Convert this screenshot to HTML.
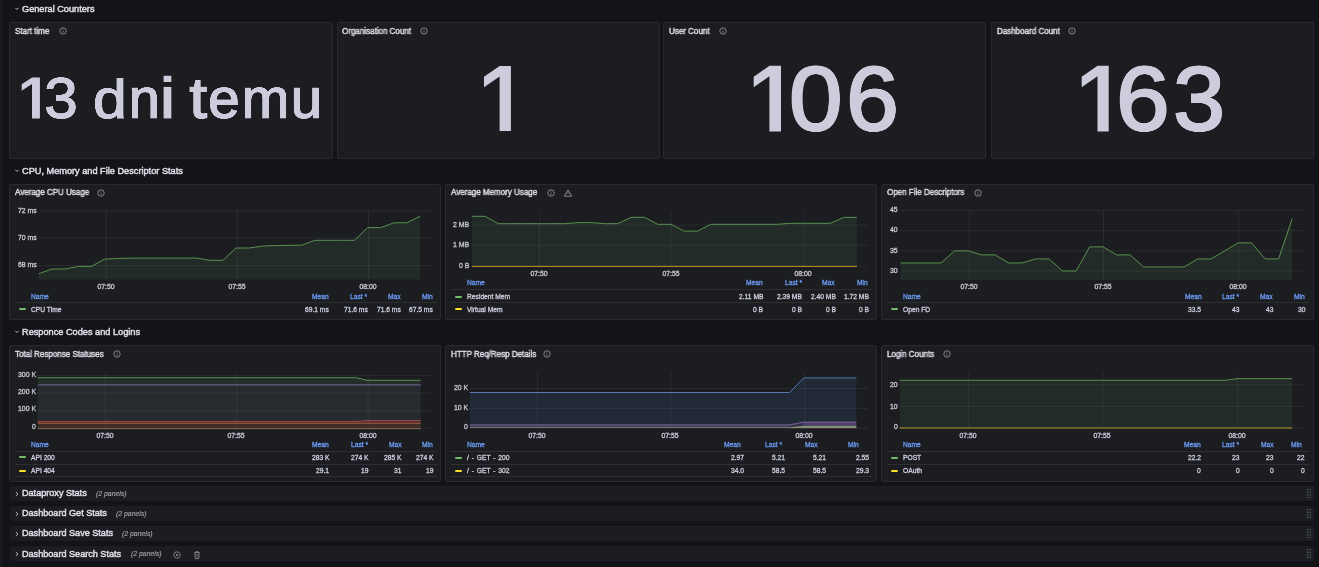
<!DOCTYPE html><html><head><meta charset="utf-8"><title>Grafana</title><style>
html,body{margin:0;padding:0;}
body{width:1319px;height:567px;overflow:hidden;position:relative;background:#131418;font-family:"Liberation Sans",sans-serif;}
.t{position:absolute;white-space:nowrap;will-change:transform;}
.panel{position:absolute;box-sizing:border-box;background:#1b1d21;border:1px solid #282a2f;border-radius:2px;}
.ic{position:absolute;overflow:visible;}
svg.charts{position:absolute;left:0;top:0;}
</style></head><body><div style="position:absolute;left:0px;top:0px;width:2.2px;height:567px;background:#1a1c20;"></div><div class="panel" style="left:9.1px;top:22.3px;width:323.5px;height:136.7px"></div><div class="panel" style="left:336.5px;top:22.3px;width:323.29999999999995px;height:136.7px"></div><div class="panel" style="left:663.15px;top:22.3px;width:323.20000000000005px;height:136.7px"></div><div class="panel" style="left:990.8px;top:22.3px;width:323.0px;height:136.7px"></div><div class="panel" style="left:9.1px;top:183.7px;width:432.29999999999995px;height:136.7px"></div><div class="panel" style="left:445.35px;top:183.7px;width:432.04999999999995px;height:136.7px"></div><div class="panel" style="left:881.4px;top:183.7px;width:432.4px;height:136.7px"></div><div style="position:absolute;left:15.5px;top:301.7px;width:421.2px;height:1.0px;background:rgba(204,204,220,0.10);"></div><div style="position:absolute;left:19.2px;top:308.2px;width:6.900000000000002px;height:2.0px;background:#73bf69;border-radius:1px"></div><div style="position:absolute;left:451.3px;top:289.0px;width:420.90000000000003px;height:1.0px;background:rgba(204,204,220,0.10);"></div><div style="position:absolute;left:451.3px;top:301.7px;width:420.90000000000003px;height:1.0px;background:rgba(204,204,220,0.10);"></div><div style="position:absolute;left:455.2px;top:295.7px;width:6.900000000000034px;height:2.0px;background:#73bf69;border-radius:1px"></div><div style="position:absolute;left:455.2px;top:308.4px;width:6.900000000000034px;height:2.0px;background:#fade2a;border-radius:1px"></div><div style="position:absolute;left:887.3px;top:302.1px;width:421.29999999999995px;height:1.0px;background:rgba(204,204,220,0.10);"></div><div style="position:absolute;left:891.2px;top:308.4px;width:6.899999999999977px;height:2.0px;background:#73bf69;border-radius:1px"></div><div class="panel" style="left:9.1px;top:344.9px;width:432.29999999999995px;height:136.70000000000005px"></div><div class="panel" style="left:445.35px;top:344.9px;width:432.04999999999995px;height:136.70000000000005px"></div><div class="panel" style="left:881.4px;top:344.9px;width:432.4px;height:136.70000000000005px"></div><div style="position:absolute;left:15.5px;top:450.9px;width:421.2px;height:1.0px;background:rgba(204,204,220,0.10);"></div><div style="position:absolute;left:15.5px;top:463.6px;width:421.2px;height:1.0px;background:rgba(204,204,220,0.10);"></div><div style="position:absolute;left:15.5px;top:476.1px;width:421.2px;height:1.0px;background:rgba(204,204,220,0.10);"></div><div style="position:absolute;left:19.2px;top:456.4px;width:6.900000000000002px;height:2.0px;background:#73bf69;border-radius:1px"></div><div style="position:absolute;left:19.2px;top:469.6px;width:6.900000000000002px;height:2.0px;background:#fade2a;border-radius:1px"></div><div style="position:absolute;left:451.3px;top:450.9px;width:420.90000000000003px;height:1.0px;background:rgba(204,204,220,0.10);"></div><div style="position:absolute;left:451.3px;top:463.6px;width:420.90000000000003px;height:1.0px;background:rgba(204,204,220,0.10);"></div><div style="position:absolute;left:451.3px;top:476.1px;width:420.90000000000003px;height:1.0px;background:rgba(204,204,220,0.10);"></div><div style="position:absolute;left:455.2px;top:456.5px;width:6.900000000000034px;height:2.0px;background:#73bf69;border-radius:1px"></div><div style="position:absolute;left:455.2px;top:469.7px;width:6.900000000000034px;height:2.0px;background:#fade2a;border-radius:1px"></div><div style="position:absolute;left:887.3px;top:450.9px;width:421.29999999999995px;height:1.0px;background:rgba(204,204,220,0.10);"></div><div style="position:absolute;left:887.3px;top:463.6px;width:421.29999999999995px;height:1.0px;background:rgba(204,204,220,0.10);"></div><div style="position:absolute;left:891.2px;top:456.5px;width:6.899999999999977px;height:2.0px;background:#73bf69;border-radius:1px"></div><div style="position:absolute;left:891.2px;top:469.7px;width:6.899999999999977px;height:2.0px;background:#fade2a;border-radius:1px"></div><div style="position:absolute;left:9.5px;top:486.1px;width:1304.0px;height:14.799999999999955px;background:#1b1d21;border-radius:2px"></div><div style="position:absolute;left:9.5px;top:506.2px;width:1304.0px;height:14.800000000000011px;background:#1b1d21;border-radius:2px"></div><div style="position:absolute;left:9.5px;top:526.2px;width:1304.0px;height:14.799999999999955px;background:#1b1d21;border-radius:2px"></div><div style="position:absolute;left:9.5px;top:546.3px;width:1304.0px;height:15.0px;background:#1b1d21;border-radius:2px"></div><svg class="charts" width="1319" height="567" viewBox="0 0 1319 567"><line x1="38.8" y1="211.0" x2="432.2" y2="211.0" stroke="rgba(204,204,220,0.08)" stroke-width="1"/><line x1="38.8" y1="237.9" x2="432.2" y2="237.9" stroke="rgba(204,204,220,0.08)" stroke-width="1"/><line x1="38.8" y1="265.5" x2="432.2" y2="265.5" stroke="rgba(204,204,220,0.08)" stroke-width="1"/><line x1="106.2" y1="210.5" x2="106.2" y2="279.6" stroke="rgba(204,204,220,0.08)" stroke-width="1"/><line x1="237.3" y1="210.5" x2="237.3" y2="279.6" stroke="rgba(204,204,220,0.08)" stroke-width="1"/><line x1="368.5" y1="210.5" x2="368.5" y2="279.6" stroke="rgba(204,204,220,0.08)" stroke-width="1"/><polygon points="38.80,279.6 38.80,273.70 51.95,269.00 65.10,269.00 78.25,266.40 91.40,266.40 104.55,259.10 117.70,258.50 130.85,258.10 144.00,258.10 157.15,258.10 170.30,258.10 183.45,258.10 196.60,258.10 209.75,260.30 222.90,260.30 236.05,248.00 249.20,248.00 262.35,246.10 275.50,245.60 288.65,245.40 301.80,245.10 314.95,240.30 328.10,240.30 341.25,240.30 354.40,240.30 367.55,227.60 380.70,227.60 393.85,222.80 407.00,222.80 420.15,216.10 420.15,279.6" fill="rgba(115,191,105,0.09)"/><polyline points="38.80,273.70 51.95,269.00 65.10,269.00 78.25,266.40 91.40,266.40 104.55,259.10 117.70,258.50 130.85,258.10 144.00,258.10 157.15,258.10 170.30,258.10 183.45,258.10 196.60,258.10 209.75,260.30 222.90,260.30 236.05,248.00 249.20,248.00 262.35,246.10 275.50,245.60 288.65,245.40 301.80,245.10 314.95,240.30 328.10,240.30 341.25,240.30 354.40,240.30 367.55,227.60 380.70,227.60 393.85,222.80 407.00,222.80 420.15,216.10" fill="none" stroke="#5a9150" stroke-width="1.0" stroke-linejoin="round"/><line x1="471.8" y1="225.0" x2="868" y2="225.0" stroke="rgba(204,204,220,0.08)" stroke-width="1"/><line x1="471.8" y1="245.3" x2="868" y2="245.3" stroke="rgba(204,204,220,0.08)" stroke-width="1"/><line x1="471.8" y1="266.0" x2="868" y2="266.0" stroke="rgba(204,204,220,0.08)" stroke-width="1"/><line x1="539.5" y1="210.6" x2="539.5" y2="266.3" stroke="rgba(204,204,220,0.08)" stroke-width="1"/><line x1="671.2" y1="210.6" x2="671.2" y2="266.3" stroke="rgba(204,204,220,0.08)" stroke-width="1"/><line x1="804.0" y1="210.6" x2="804.0" y2="266.3" stroke="rgba(204,204,220,0.08)" stroke-width="1"/><polygon points="471.80,266.3 471.80,216.30 485.08,216.30 498.36,223.70 511.64,223.70 524.92,223.70 538.20,223.70 551.48,223.70 564.76,223.70 578.04,222.60 591.32,222.60 604.60,223.70 617.88,223.70 631.16,217.30 644.44,217.30 657.72,224.30 671.00,224.30 684.28,231.10 697.56,231.10 710.84,224.30 724.12,224.30 737.40,224.30 750.68,224.30 763.96,224.30 777.24,224.30 790.52,223.30 803.80,223.30 817.08,223.30 830.36,223.30 843.64,217.40 856.92,217.40 856.92,266.3" fill="rgba(115,191,105,0.09)"/><polyline points="471.80,216.30 485.08,216.30 498.36,223.70 511.64,223.70 524.92,223.70 538.20,223.70 551.48,223.70 564.76,223.70 578.04,222.60 591.32,222.60 604.60,223.70 617.88,223.70 631.16,217.30 644.44,217.30 657.72,224.30 671.00,224.30 684.28,231.10 697.56,231.10 710.84,224.30 724.12,224.30 737.40,224.30 750.68,224.30 763.96,224.30 777.24,224.30 790.52,223.30 803.80,223.30 817.08,223.30 830.36,223.30 843.64,217.40 856.92,217.40" fill="none" stroke="#5a9150" stroke-width="1.0" stroke-linejoin="round"/><polyline points="471.80,266.40 857.00,266.40" fill="none" stroke="#b39a2a" stroke-width="1.0" stroke-linejoin="round"/><line x1="900.6" y1="210.6" x2="1304" y2="210.6" stroke="rgba(204,204,220,0.08)" stroke-width="1"/><line x1="900.6" y1="230.7" x2="1304" y2="230.7" stroke="rgba(204,204,220,0.08)" stroke-width="1"/><line x1="900.6" y1="250.8" x2="1304" y2="250.8" stroke="rgba(204,204,220,0.08)" stroke-width="1"/><line x1="900.6" y1="271.0" x2="1304" y2="271.0" stroke="rgba(204,204,220,0.08)" stroke-width="1"/><line x1="969.4" y1="210.6" x2="969.4" y2="279.8" stroke="rgba(204,204,220,0.08)" stroke-width="1"/><line x1="1103.5" y1="210.6" x2="1103.5" y2="279.8" stroke="rgba(204,204,220,0.08)" stroke-width="1"/><line x1="1238.4" y1="210.6" x2="1238.4" y2="279.8" stroke="rgba(204,204,220,0.08)" stroke-width="1"/><polygon points="900.60,279.8 900.60,262.96 914.10,262.96 927.60,262.96 941.10,262.96 954.60,250.90 968.10,250.90 981.60,254.92 995.10,254.92 1008.60,262.96 1022.10,262.96 1035.60,258.94 1049.10,258.94 1062.60,271.00 1076.10,271.00 1089.60,246.88 1103.10,246.88 1116.60,254.92 1130.10,254.92 1143.60,266.98 1157.10,266.98 1170.60,266.98 1184.10,266.98 1197.60,258.94 1211.10,258.94 1224.60,250.90 1238.10,242.86 1251.60,242.86 1265.10,258.94 1278.60,258.94 1292.10,218.74 1292.10,279.8" fill="rgba(115,191,105,0.09)"/><polyline points="900.60,262.96 914.10,262.96 927.60,262.96 941.10,262.96 954.60,250.90 968.10,250.90 981.60,254.92 995.10,254.92 1008.60,262.96 1022.10,262.96 1035.60,258.94 1049.10,258.94 1062.60,271.00 1076.10,271.00 1089.60,246.88 1103.10,246.88 1116.60,254.92 1130.10,254.92 1143.60,266.98 1157.10,266.98 1170.60,266.98 1184.10,266.98 1197.60,258.94 1211.10,258.94 1224.60,250.90 1238.10,242.86 1251.60,242.86 1265.10,258.94 1278.60,258.94 1292.10,218.74" fill="none" stroke="#5a9150" stroke-width="1.0" stroke-linejoin="round"/><polygon points="32.0,77.5 39.9,77.5 39.9,118.5 32.0,118.5 32.0,84.06 21.7,90.866 21.7,84.306" fill="#ccccdc"/><polygon points="499.6,66 510.9,66 510.9,131 499.6,131 499.6,76.40 484,87.19 484,76.79" fill="#ccccdc"/><polygon points="769.4,65.8 781,65.8 781,131.5 769.4,131.5 769.4,76.31 753.7,87.2182 753.7,76.7062" fill="#ccccdc"/><polygon points="1097.5,65.8 1108.7,65.8 1108.7,131.5 1097.5,131.5 1097.5,76.31 1081.7,87.2182 1081.7,76.7062" fill="#ccccdc"/><line x1="37.7" y1="375.4" x2="432.2" y2="375.4" stroke="rgba(204,204,220,0.08)" stroke-width="1"/><line x1="37.7" y1="393.1" x2="432.2" y2="393.1" stroke="rgba(204,204,220,0.08)" stroke-width="1"/><line x1="37.7" y1="410.7" x2="432.2" y2="410.7" stroke="rgba(204,204,220,0.08)" stroke-width="1"/><line x1="37.7" y1="428.3" x2="432.2" y2="428.3" stroke="rgba(204,204,220,0.08)" stroke-width="1"/><line x1="105.4" y1="372.2" x2="105.4" y2="429.0" stroke="rgba(204,204,220,0.08)" stroke-width="1"/><line x1="236.8" y1="372.2" x2="236.8" y2="429.0" stroke="rgba(204,204,220,0.08)" stroke-width="1"/><line x1="368.1" y1="372.2" x2="368.1" y2="429.0" stroke="rgba(204,204,220,0.08)" stroke-width="1"/><polygon points="37.70,377.70 356.50,377.70 367.00,380.30 420.70,380.30 420.70,384.90 37.70,384.90" fill="rgba(115,191,105,0.10)"/><polygon points="37.70,384.90 420.70,384.90 420.70,420.80 37.70,420.80" fill="rgba(150,185,185,0.09)"/><polygon points="37.70,421.40 356.00,421.40 367.00,420.60 420.70,420.60 420.70,423.00 37.70,423.00" fill="rgba(200,80,80,0.28)"/><polygon points="37.70,423.00 420.70,423.00 420.70,429.00 37.70,429.00" fill="rgba(190,110,70,0.22)"/><polyline points="37.70,377.70 356.50,377.70 367.00,380.30 420.70,380.30" fill="none" stroke="#5a9150" stroke-width="1.0" stroke-linejoin="round"/><polyline points="37.70,384.90 420.70,384.90" fill="none" stroke="#6f6d9a" stroke-width="1.0" stroke-linejoin="round"/><polyline points="37.70,421.40 356.00,421.40 367.00,420.60 420.70,420.60" fill="none" stroke="#a34c4e" stroke-width="1.0" stroke-linejoin="round"/><polyline points="37.70,423.20 420.70,423.20" fill="none" stroke="#b4683f" stroke-width="0.9" stroke-linejoin="round"/><polyline points="37.70,428.70 420.70,428.70" fill="none" stroke="#8a6a58" stroke-width="0.9" stroke-linejoin="round"/><line x1="469.8" y1="388.5" x2="868" y2="388.5" stroke="rgba(204,204,220,0.08)" stroke-width="1"/><line x1="469.8" y1="408.4" x2="868" y2="408.4" stroke="rgba(204,204,220,0.08)" stroke-width="1"/><line x1="469.8" y1="428.2" x2="868" y2="428.2" stroke="rgba(204,204,220,0.08)" stroke-width="1"/><line x1="537.5" y1="372.2" x2="537.5" y2="428.3" stroke="rgba(204,204,220,0.08)" stroke-width="1"/><line x1="671.0" y1="372.2" x2="671.0" y2="428.3" stroke="rgba(204,204,220,0.08)" stroke-width="1"/><line x1="804.5" y1="372.2" x2="804.5" y2="428.3" stroke="rgba(204,204,220,0.08)" stroke-width="1"/><polygon points="469.80,392.50 789.60,392.50 803.80,377.90 856.30,377.90 856.30,428.30 469.80,428.30" fill="rgba(87,148,242,0.10)"/><polygon points="469.80,424.90 789.60,424.90 803.80,422.10 856.30,422.10 856.30,428.30 469.80,428.30" fill="rgba(184,119,217,0.12)"/><polygon points="803.80,422.10 856.30,422.10 856.30,425.50 803.80,425.50" fill="rgba(184,119,217,0.22)"/><polygon points="789.60,427.30 803.80,425.80 856.30,425.80 856.30,428.50 789.60,428.50" fill="rgba(190,225,160,0.55)"/><polyline points="469.80,392.50 789.60,392.50 803.80,377.90 856.30,377.90" fill="none" stroke="#527aae" stroke-width="1.0" stroke-linejoin="round"/><polyline points="469.80,424.90 789.60,424.90 803.80,422.10 856.30,422.10" fill="none" stroke="#6f5a8c" stroke-width="1.1" stroke-linejoin="round"/><polyline points="469.80,427.30 789.60,427.30" fill="none" stroke="#8a917f" stroke-width="0.9" stroke-linejoin="round"/><polyline points="469.80,428.70 856.30,428.70" fill="none" stroke="#2e1c1e" stroke-width="0.8" stroke-linejoin="round"/><line x1="899.7" y1="384.7" x2="1303.7" y2="384.7" stroke="rgba(204,204,220,0.08)" stroke-width="1"/><line x1="899.7" y1="406.4" x2="1303.7" y2="406.4" stroke="rgba(204,204,220,0.08)" stroke-width="1"/><line x1="899.7" y1="428.0" x2="1303.7" y2="428.0" stroke="rgba(204,204,220,0.08)" stroke-width="1"/><line x1="968.7" y1="372.2" x2="968.7" y2="428.0" stroke="rgba(204,204,220,0.08)" stroke-width="1"/><line x1="1103.0" y1="372.2" x2="1103.0" y2="428.0" stroke="rgba(204,204,220,0.08)" stroke-width="1"/><line x1="1237.7" y1="372.2" x2="1237.7" y2="428.0" stroke="rgba(204,204,220,0.08)" stroke-width="1"/><polygon points="899.70,380.30 1225.30,380.30 1237.00,378.70 1292.00,378.70 1292.00,428.00 899.70,428.00" fill="rgba(115,191,105,0.09)"/><polyline points="899.70,380.30 1225.30,380.30 1237.00,378.70 1292.00,378.70" fill="none" stroke="#5a9150" stroke-width="1.0" stroke-linejoin="round"/><polyline points="899.70,428.00 1292.00,428.00" fill="none" stroke="#b39a2a" stroke-width="1.0" stroke-linejoin="round"/></svg><svg class="ic" style="left:13px;top:5.4px" width="8" height="8" viewBox="0 0 8 8"><path d="M2.4 2.9 L4 4.5 L5.6 2.9" fill="none" stroke="#ccccdc" stroke-width="0.9"/></svg><div class="t " style="left:21.70px;top:5.39px;font-size:9.2px;line-height:9.2px;font-weight:normal;color:#dcdce6;-webkit-text-stroke:0.5px #dcdce6">General Counters</div><div class="t " style="left:15.00px;top:26.93px;font-size:8.3px;line-height:8.3px;font-weight:normal;color:#dcdce6;-webkit-text-stroke:0.45px #dcdce6;transform:scaleX(0.965);transform-origin:0 0">Start time</div><svg class="ic" style="left:57px;top:25.2px" width="12" height="12" viewBox="0 0 12 12"><circle cx="6" cy="6" r="3.2" fill="none" stroke="#8e8e96" stroke-width="0.9"/><line x1="6" y1="5.6" x2="6" y2="7.8" stroke="#8e8e96" stroke-width="0.8"/><circle cx="6" cy="4.4" r="0.45" fill="#8e8e96"/></svg><div class="t " style="left:342.40px;top:26.93px;font-size:8.3px;line-height:8.3px;font-weight:normal;color:#dcdce6;-webkit-text-stroke:0.45px #dcdce6;transform:scaleX(0.965);transform-origin:0 0">Organisation Count</div><svg class="ic" style="left:418.3px;top:25.2px" width="12" height="12" viewBox="0 0 12 12"><circle cx="6" cy="6" r="3.2" fill="none" stroke="#8e8e96" stroke-width="0.9"/><line x1="6" y1="5.6" x2="6" y2="7.8" stroke="#8e8e96" stroke-width="0.8"/><circle cx="6" cy="4.4" r="0.45" fill="#8e8e96"/></svg><div class="t " style="left:669.05px;top:26.93px;font-size:8.3px;line-height:8.3px;font-weight:normal;color:#dcdce6;-webkit-text-stroke:0.45px #dcdce6;transform:scaleX(0.965);transform-origin:0 0">User Count</div><svg class="ic" style="left:716.6px;top:25.2px" width="12" height="12" viewBox="0 0 12 12"><circle cx="6" cy="6" r="3.2" fill="none" stroke="#8e8e96" stroke-width="0.9"/><line x1="6" y1="5.6" x2="6" y2="7.8" stroke="#8e8e96" stroke-width="0.8"/><circle cx="6" cy="4.4" r="0.45" fill="#8e8e96"/></svg><div class="t " style="left:996.70px;top:26.93px;font-size:8.3px;line-height:8.3px;font-weight:normal;color:#dcdce6;-webkit-text-stroke:0.45px #dcdce6;transform:scaleX(0.965);transform-origin:0 0">Dashboard Count</div><svg class="ic" style="left:1066px;top:25.2px" width="12" height="12" viewBox="0 0 12 12"><circle cx="6" cy="6" r="3.2" fill="none" stroke="#8e8e96" stroke-width="0.9"/><line x1="6" y1="5.6" x2="6" y2="7.8" stroke="#8e8e96" stroke-width="0.8"/><circle cx="6" cy="4.4" r="0.45" fill="#8e8e96"/></svg><svg class="ic" style="left:13px;top:167px" width="8" height="8" viewBox="0 0 8 8"><path d="M2.4 2.9 L4 4.5 L5.6 2.9" fill="none" stroke="#ccccdc" stroke-width="0.9"/></svg><div class="t " style="left:21.70px;top:166.99px;font-size:9.2px;line-height:9.2px;font-weight:normal;color:#dcdce6;-webkit-text-stroke:0.5px #dcdce6">CPU, Memory and File Descriptor Stats</div><div class="t " style="left:15.30px;top:188.23px;font-size:8.3px;line-height:8.3px;font-weight:normal;color:#dcdce6;-webkit-text-stroke:0.45px #dcdce6;transform:scaleX(0.965);transform-origin:0 0">Average CPU Usage</div><svg class="ic" style="left:94.5px;top:186.6px" width="12" height="12" viewBox="0 0 12 12"><circle cx="6" cy="6" r="3.2" fill="none" stroke="#8e8e96" stroke-width="0.9"/><line x1="6" y1="5.6" x2="6" y2="7.8" stroke="#8e8e96" stroke-width="0.8"/><circle cx="6" cy="4.4" r="0.45" fill="#8e8e96"/></svg><div class="t " style="left:451.20px;top:188.23px;font-size:8.3px;line-height:8.3px;font-weight:normal;color:#dcdce6;-webkit-text-stroke:0.45px #dcdce6;transform:scaleX(0.965);transform-origin:0 0">Average Memory Usage</div><svg class="ic" style="left:544.9px;top:186.8px" width="12" height="12" viewBox="0 0 12 12"><circle cx="6" cy="6" r="3.2" fill="none" stroke="#8e8e96" stroke-width="0.9"/><line x1="6" y1="5.6" x2="6" y2="7.8" stroke="#8e8e96" stroke-width="0.8"/><circle cx="6" cy="4.4" r="0.45" fill="#8e8e96"/></svg><svg class="ic" style="left:561.5px;top:186.8px" width="12" height="12" viewBox="0 0 12 12"><path d="M6 2.8 L9.7 9.2 L2.3 9.2 Z" fill="none" stroke="#8e8e96" stroke-width="0.95" stroke-linejoin="round"/><line x1="6" y1="5" x2="6" y2="7.2" stroke="#8e8e96" stroke-width="0.7"/></svg><div class="t " style="left:887.20px;top:188.23px;font-size:8.3px;line-height:8.3px;font-weight:normal;color:#dcdce6;-webkit-text-stroke:0.45px #dcdce6;transform:scaleX(0.965);transform-origin:0 0">Open File Descriptors</div><svg class="ic" style="left:971.7px;top:186.8px" width="12" height="12" viewBox="0 0 12 12"><circle cx="6" cy="6" r="3.2" fill="none" stroke="#8e8e96" stroke-width="0.9"/><line x1="6" y1="5.6" x2="6" y2="7.8" stroke="#8e8e96" stroke-width="0.8"/><circle cx="6" cy="4.4" r="0.45" fill="#8e8e96"/></svg><div class="t " style="right:1282.60px;top:207.72px;font-size:6.9px;line-height:6.9px;font-weight:normal;color:#c8c8d4;-webkit-text-stroke:0.3px currentColor">72 ms</div><div class="t " style="right:1282.60px;top:234.62px;font-size:6.9px;line-height:6.9px;font-weight:normal;color:#c8c8d4;-webkit-text-stroke:0.3px currentColor">70 ms</div><div class="t " style="right:1282.60px;top:262.22px;font-size:6.9px;line-height:6.9px;font-weight:normal;color:#c8c8d4;-webkit-text-stroke:0.3px currentColor">68 ms</div><div class="t " style="left:105.60px;transform:translateX(-50%);top:284.32px;font-size:6.9px;line-height:6.9px;font-weight:normal;color:#c8c8d4;-webkit-text-stroke:0.3px currentColor">07:50</div><div class="t " style="left:236.70px;transform:translateX(-50%);top:284.32px;font-size:6.9px;line-height:6.9px;font-weight:normal;color:#c8c8d4;-webkit-text-stroke:0.3px currentColor">07:55</div><div class="t " style="left:367.90px;transform:translateX(-50%);top:284.32px;font-size:6.9px;line-height:6.9px;font-weight:normal;color:#c8c8d4;-webkit-text-stroke:0.3px currentColor">08:00</div><div class="t " style="left:30.90px;top:293.82px;font-size:6.7px;line-height:6.7px;font-weight:normal;color:#6b9af2;-webkit-text-stroke:0.3px currentColor">Name</div><div class="t " style="right:989.80px;top:293.82px;font-size:6.7px;line-height:6.7px;font-weight:normal;color:#6b9af2;-webkit-text-stroke:0.3px currentColor">Mean</div><div class="t " style="right:951.90px;top:293.82px;font-size:6.7px;line-height:6.7px;font-weight:normal;color:#6b9af2;-webkit-text-stroke:0.3px currentColor">Last *</div><div class="t " style="right:918.20px;top:293.82px;font-size:6.7px;line-height:6.7px;font-weight:normal;color:#6b9af2;-webkit-text-stroke:0.3px currentColor">Max</div><div class="t " style="right:886.60px;top:293.82px;font-size:6.7px;line-height:6.7px;font-weight:normal;color:#6b9af2;-webkit-text-stroke:0.3px currentColor">Min</div><div class="t " style="left:31.00px;top:306.52px;font-size:6.7px;line-height:6.7px;font-weight:normal;color:#ccccdc;-webkit-text-stroke:0.3px currentColor">CPU Time</div><div class="t " style="right:990.00px;top:306.52px;font-size:6.7px;line-height:6.7px;font-weight:normal;color:#ccccdc;-webkit-text-stroke:0.3px currentColor">69.1 ms</div><div class="t " style="right:951.50px;top:306.52px;font-size:6.7px;line-height:6.7px;font-weight:normal;color:#ccccdc;-webkit-text-stroke:0.3px currentColor">71.6 ms</div><div class="t " style="right:918.20px;top:306.52px;font-size:6.7px;line-height:6.7px;font-weight:normal;color:#ccccdc;-webkit-text-stroke:0.3px currentColor">71.6 ms</div><div class="t " style="right:886.10px;top:306.52px;font-size:6.7px;line-height:6.7px;font-weight:normal;color:#ccccdc;-webkit-text-stroke:0.3px currentColor">67.5 ms</div><div class="t " style="right:849.70px;top:221.72px;font-size:6.9px;line-height:6.9px;font-weight:normal;color:#c8c8d4;-webkit-text-stroke:0.3px currentColor">2 MB</div><div class="t " style="right:849.70px;top:242.02px;font-size:6.9px;line-height:6.9px;font-weight:normal;color:#c8c8d4;-webkit-text-stroke:0.3px currentColor">1 MB</div><div class="t " style="right:849.70px;top:262.72px;font-size:6.9px;line-height:6.9px;font-weight:normal;color:#c8c8d4;-webkit-text-stroke:0.3px currentColor">0 B</div><div class="t " style="left:538.90px;transform:translateX(-50%);top:271.22px;font-size:6.9px;line-height:6.9px;font-weight:normal;color:#c8c8d4;-webkit-text-stroke:0.3px currentColor">07:50</div><div class="t " style="left:670.60px;transform:translateX(-50%);top:271.22px;font-size:6.9px;line-height:6.9px;font-weight:normal;color:#c8c8d4;-webkit-text-stroke:0.3px currentColor">07:55</div><div class="t " style="left:803.40px;transform:translateX(-50%);top:271.22px;font-size:6.9px;line-height:6.9px;font-weight:normal;color:#c8c8d4;-webkit-text-stroke:0.3px currentColor">08:00</div><div class="t " style="left:466.90px;top:280.22px;font-size:6.7px;line-height:6.7px;font-weight:normal;color:#6b9af2;-webkit-text-stroke:0.3px currentColor">Name</div><div class="t " style="right:555.80px;top:280.22px;font-size:6.7px;line-height:6.7px;font-weight:normal;color:#6b9af2;-webkit-text-stroke:0.3px currentColor">Mean</div><div class="t " style="right:517.30px;top:280.22px;font-size:6.7px;line-height:6.7px;font-weight:normal;color:#6b9af2;-webkit-text-stroke:0.3px currentColor">Last *</div><div class="t " style="right:483.90px;top:280.22px;font-size:6.7px;line-height:6.7px;font-weight:normal;color:#6b9af2;-webkit-text-stroke:0.3px currentColor">Max</div><div class="t " style="right:451.00px;top:280.22px;font-size:6.7px;line-height:6.7px;font-weight:normal;color:#6b9af2;-webkit-text-stroke:0.3px currentColor">Min</div><div class="t " style="left:467.00px;top:294.02px;font-size:6.7px;line-height:6.7px;font-weight:normal;color:#ccccdc;-webkit-text-stroke:0.3px currentColor">Resident Mem</div><div class="t " style="right:555.80px;top:294.02px;font-size:6.7px;line-height:6.7px;font-weight:normal;color:#ccccdc;-webkit-text-stroke:0.3px currentColor">2.11 MB</div><div class="t " style="right:517.30px;top:294.02px;font-size:6.7px;line-height:6.7px;font-weight:normal;color:#ccccdc;-webkit-text-stroke:0.3px currentColor">2.39 MB</div><div class="t " style="right:482.80px;top:294.02px;font-size:6.7px;line-height:6.7px;font-weight:normal;color:#ccccdc;-webkit-text-stroke:0.3px currentColor">2.40 MB</div><div class="t " style="right:450.00px;top:294.02px;font-size:6.7px;line-height:6.7px;font-weight:normal;color:#ccccdc;-webkit-text-stroke:0.3px currentColor">1.72 MB</div><div class="t " style="left:467.00px;top:306.72px;font-size:6.7px;line-height:6.7px;font-weight:normal;color:#ccccdc;-webkit-text-stroke:0.3px currentColor">Virtual Mem</div><div class="t " style="right:555.80px;top:306.72px;font-size:6.7px;line-height:6.7px;font-weight:normal;color:#ccccdc;-webkit-text-stroke:0.3px currentColor">0 B</div><div class="t " style="right:517.30px;top:306.72px;font-size:6.7px;line-height:6.7px;font-weight:normal;color:#ccccdc;-webkit-text-stroke:0.3px currentColor">0 B</div><div class="t " style="right:482.80px;top:306.72px;font-size:6.7px;line-height:6.7px;font-weight:normal;color:#ccccdc;-webkit-text-stroke:0.3px currentColor">0 B</div><div class="t " style="right:450.00px;top:306.72px;font-size:6.7px;line-height:6.7px;font-weight:normal;color:#ccccdc;-webkit-text-stroke:0.3px currentColor">0 B</div><div class="t " style="right:421.00px;top:207.32px;font-size:6.9px;line-height:6.9px;font-weight:normal;color:#c8c8d4;-webkit-text-stroke:0.3px currentColor">45</div><div class="t " style="right:421.00px;top:227.42px;font-size:6.9px;line-height:6.9px;font-weight:normal;color:#c8c8d4;-webkit-text-stroke:0.3px currentColor">40</div><div class="t " style="right:421.00px;top:247.52px;font-size:6.9px;line-height:6.9px;font-weight:normal;color:#c8c8d4;-webkit-text-stroke:0.3px currentColor">35</div><div class="t " style="right:421.00px;top:267.72px;font-size:6.9px;line-height:6.9px;font-weight:normal;color:#c8c8d4;-webkit-text-stroke:0.3px currentColor">30</div><div class="t " style="left:968.80px;transform:translateX(-50%);top:283.92px;font-size:6.9px;line-height:6.9px;font-weight:normal;color:#c8c8d4;-webkit-text-stroke:0.3px currentColor">07:50</div><div class="t " style="left:1102.90px;transform:translateX(-50%);top:283.92px;font-size:6.9px;line-height:6.9px;font-weight:normal;color:#c8c8d4;-webkit-text-stroke:0.3px currentColor">07:55</div><div class="t " style="left:1237.80px;transform:translateX(-50%);top:283.92px;font-size:6.9px;line-height:6.9px;font-weight:normal;color:#c8c8d4;-webkit-text-stroke:0.3px currentColor">08:00</div><div class="t " style="left:902.90px;top:294.02px;font-size:6.7px;line-height:6.7px;font-weight:normal;color:#6b9af2;-webkit-text-stroke:0.3px currentColor">Name</div><div class="t " style="right:117.60px;top:294.02px;font-size:6.7px;line-height:6.7px;font-weight:normal;color:#6b9af2;-webkit-text-stroke:0.3px currentColor">Mean</div><div class="t " style="right:79.50px;top:294.02px;font-size:6.7px;line-height:6.7px;font-weight:normal;color:#6b9af2;-webkit-text-stroke:0.3px currentColor">Last *</div><div class="t " style="right:45.90px;top:294.02px;font-size:6.7px;line-height:6.7px;font-weight:normal;color:#6b9af2;-webkit-text-stroke:0.3px currentColor">Max</div><div class="t " style="right:13.90px;top:294.02px;font-size:6.7px;line-height:6.7px;font-weight:normal;color:#6b9af2;-webkit-text-stroke:0.3px currentColor">Min</div><div class="t " style="left:903.00px;top:306.72px;font-size:6.7px;line-height:6.7px;font-weight:normal;color:#ccccdc;-webkit-text-stroke:0.3px currentColor">Open FD</div><div class="t " style="right:117.60px;top:306.72px;font-size:6.7px;line-height:6.7px;font-weight:normal;color:#ccccdc;-webkit-text-stroke:0.3px currentColor">33.5</div><div class="t " style="right:79.10px;top:306.72px;font-size:6.7px;line-height:6.7px;font-weight:normal;color:#ccccdc;-webkit-text-stroke:0.3px currentColor">43</div><div class="t " style="right:45.90px;top:306.72px;font-size:6.7px;line-height:6.7px;font-weight:normal;color:#ccccdc;-webkit-text-stroke:0.3px currentColor">43</div><div class="t " style="right:13.90px;top:306.72px;font-size:6.7px;line-height:6.7px;font-weight:normal;color:#ccccdc;-webkit-text-stroke:0.3px currentColor">30</div><div class="t" style="left:0;top:0;font-size:200px;line-height:200px;color:#ccccdc;-webkit-text-stroke:5.2px #ccccdc;transform-origin:0 0;transform:matrix(0.29800,0,0,0.28446,44.410,69.604)">3</div><div class="t" style="left:0;top:0;font-size:200px;line-height:200px;color:#ccccdc;-webkit-text-stroke:5.2px #ccccdc;transform-origin:0 0;transform:matrix(0.30105,0,0,0.26863,93.194,72.259)">d</div><div class="t" style="left:0;top:0;font-size:200px;line-height:200px;color:#ccccdc;-webkit-text-stroke:5.2px #ccccdc;transform-origin:0 0;transform:matrix(0.28022,0,0,0.27632,128.598,70.974)">n</div><div class="t" style="left:0;top:0;font-size:200px;line-height:200px;color:#ccccdc;-webkit-text-stroke:5.2px #ccccdc;transform-origin:0 0;transform:matrix(0.34348,0,0,0.28477,159.822,69.520)">i</div><div class="t" style="left:0;top:0;font-size:200px;line-height:200px;color:#ccccdc;-webkit-text-stroke:5.2px #ccccdc;transform-origin:0 0;transform:matrix(0.31930,0,0,0.28467,189.300,69.467)">t</div><div class="t" style="left:0;top:0;font-size:200px;line-height:200px;color:#ccccdc;-webkit-text-stroke:5.2px #ccccdc;transform-origin:0 0;transform:matrix(0.28182,0,0,0.27586,208.209,71.000)">e</div><div class="t" style="left:0;top:0;font-size:200px;line-height:200px;color:#ccccdc;-webkit-text-stroke:5.2px #ccccdc;transform-origin:0 0;transform:matrix(0.28630,0,0,0.27632,241.637,70.974)">m</div><div class="t" style="left:0;top:0;font-size:200px;line-height:200px;color:#ccccdc;-webkit-text-stroke:5.2px #ccccdc;transform-origin:0 0;transform:matrix(0.27912,0,0,0.27632,290.809,70.921)">u</div><div class="t" style="left:0;top:0;font-size:200px;line-height:200px;color:#ccccdc;-webkit-text-stroke:5.2px #ccccdc;transform-origin:0 0;transform:matrix(0.47822,0,0,0.45270,789.109,53.430)">0</div><div class="t" style="left:0;top:0;font-size:200px;line-height:200px;color:#ccccdc;-webkit-text-stroke:5.2px #ccccdc;transform-origin:0 0;transform:matrix(0.47113,0,0,0.45270,846.231,53.430)">6</div><div class="t" style="left:0;top:0;font-size:200px;line-height:200px;color:#ccccdc;-webkit-text-stroke:5.2px #ccccdc;transform-origin:0 0;transform:matrix(0.47938,0,0,0.45270,1116.165,53.430)">6</div><div class="t" style="left:0;top:0;font-size:200px;line-height:200px;color:#ccccdc;-webkit-text-stroke:5.2px #ccccdc;transform-origin:0 0;transform:matrix(0.46500,0,0,0.45270,1173.175,53.430)">3</div><svg class="ic" style="left:13px;top:328px" width="8" height="8" viewBox="0 0 8 8"><path d="M2.4 2.9 L4 4.5 L5.6 2.9" fill="none" stroke="#ccccdc" stroke-width="0.9"/></svg><div class="t " style="left:21.70px;top:327.99px;font-size:9.2px;line-height:9.2px;font-weight:normal;color:#dcdce6;-webkit-text-stroke:0.5px #dcdce6">Responce Codes and Logins</div><div class="t " style="left:15.30px;top:349.83px;font-size:8.3px;line-height:8.3px;font-weight:normal;color:#dcdce6;-webkit-text-stroke:0.45px #dcdce6;transform:scaleX(0.965);transform-origin:0 0">Total Response Statuses</div><svg class="ic" style="left:110.5px;top:348px" width="12" height="12" viewBox="0 0 12 12"><circle cx="6" cy="6" r="3.2" fill="none" stroke="#8e8e96" stroke-width="0.9"/><line x1="6" y1="5.6" x2="6" y2="7.8" stroke="#8e8e96" stroke-width="0.8"/><circle cx="6" cy="4.4" r="0.45" fill="#8e8e96"/></svg><div class="t " style="left:451.20px;top:349.83px;font-size:8.3px;line-height:8.3px;font-weight:normal;color:#dcdce6;-webkit-text-stroke:0.45px #dcdce6;transform:scaleX(0.965);transform-origin:0 0">HTTP Req/Resp Details</div><svg class="ic" style="left:541.3px;top:348px" width="12" height="12" viewBox="0 0 12 12"><circle cx="6" cy="6" r="3.2" fill="none" stroke="#8e8e96" stroke-width="0.9"/><line x1="6" y1="5.6" x2="6" y2="7.8" stroke="#8e8e96" stroke-width="0.8"/><circle cx="6" cy="4.4" r="0.45" fill="#8e8e96"/></svg><div class="t " style="left:887.20px;top:349.83px;font-size:8.3px;line-height:8.3px;font-weight:normal;color:#dcdce6;-webkit-text-stroke:0.45px #dcdce6;transform:scaleX(0.965);transform-origin:0 0">Login Counts</div><svg class="ic" style="left:940.7px;top:348px" width="12" height="12" viewBox="0 0 12 12"><circle cx="6" cy="6" r="3.2" fill="none" stroke="#8e8e96" stroke-width="0.9"/><line x1="6" y1="5.6" x2="6" y2="7.8" stroke="#8e8e96" stroke-width="0.8"/><circle cx="6" cy="4.4" r="0.45" fill="#8e8e96"/></svg><div class="t " style="right:1283.00px;top:371.62px;font-size:6.9px;line-height:6.9px;font-weight:normal;color:#c8c8d4;-webkit-text-stroke:0.3px currentColor">300 K</div><div class="t " style="right:1283.00px;top:388.92px;font-size:6.9px;line-height:6.9px;font-weight:normal;color:#c8c8d4;-webkit-text-stroke:0.3px currentColor">200 K</div><div class="t " style="right:1283.00px;top:406.32px;font-size:6.9px;line-height:6.9px;font-weight:normal;color:#c8c8d4;-webkit-text-stroke:0.3px currentColor">100 K</div><div class="t " style="right:1283.00px;top:423.62px;font-size:6.9px;line-height:6.9px;font-weight:normal;color:#c8c8d4;-webkit-text-stroke:0.3px currentColor">0</div><div class="t " style="left:104.80px;transform:translateX(-50%);top:432.62px;font-size:6.9px;line-height:6.9px;font-weight:normal;color:#c8c8d4;-webkit-text-stroke:0.3px currentColor">07:50</div><div class="t " style="left:236.20px;transform:translateX(-50%);top:432.62px;font-size:6.9px;line-height:6.9px;font-weight:normal;color:#c8c8d4;-webkit-text-stroke:0.3px currentColor">07:55</div><div class="t " style="left:367.50px;transform:translateX(-50%);top:432.62px;font-size:6.9px;line-height:6.9px;font-weight:normal;color:#c8c8d4;-webkit-text-stroke:0.3px currentColor">08:00</div><div class="t " style="left:30.90px;top:441.92px;font-size:6.7px;line-height:6.7px;font-weight:normal;color:#6b9af2;-webkit-text-stroke:0.3px currentColor">Name</div><div class="t " style="right:989.80px;top:441.92px;font-size:6.7px;line-height:6.7px;font-weight:normal;color:#6b9af2;-webkit-text-stroke:0.3px currentColor">Mean</div><div class="t " style="right:950.90px;top:441.92px;font-size:6.7px;line-height:6.7px;font-weight:normal;color:#6b9af2;-webkit-text-stroke:0.3px currentColor">Last *</div><div class="t " style="right:917.60px;top:441.92px;font-size:6.7px;line-height:6.7px;font-weight:normal;color:#6b9af2;-webkit-text-stroke:0.3px currentColor">Max</div><div class="t " style="right:885.80px;top:441.92px;font-size:6.7px;line-height:6.7px;font-weight:normal;color:#6b9af2;-webkit-text-stroke:0.3px currentColor">Min</div><div class="t " style="left:31.00px;top:454.72px;font-size:6.7px;line-height:6.7px;font-weight:normal;color:#ccccdc;-webkit-text-stroke:0.3px currentColor">API 200</div><div class="t " style="right:989.80px;top:454.72px;font-size:6.7px;line-height:6.7px;font-weight:normal;color:#ccccdc;-webkit-text-stroke:0.3px currentColor">283 K</div><div class="t " style="right:950.90px;top:454.72px;font-size:6.7px;line-height:6.7px;font-weight:normal;color:#ccccdc;-webkit-text-stroke:0.3px currentColor">274 K</div><div class="t " style="right:917.60px;top:454.72px;font-size:6.7px;line-height:6.7px;font-weight:normal;color:#ccccdc;-webkit-text-stroke:0.3px currentColor">285 K</div><div class="t " style="right:885.80px;top:454.72px;font-size:6.7px;line-height:6.7px;font-weight:normal;color:#ccccdc;-webkit-text-stroke:0.3px currentColor">274 K</div><div class="t " style="left:31.00px;top:467.92px;font-size:6.7px;line-height:6.7px;font-weight:normal;color:#ccccdc;-webkit-text-stroke:0.3px currentColor">API 404</div><div class="t " style="right:989.80px;top:467.92px;font-size:6.7px;line-height:6.7px;font-weight:normal;color:#ccccdc;-webkit-text-stroke:0.3px currentColor">29.1</div><div class="t " style="right:950.90px;top:467.92px;font-size:6.7px;line-height:6.7px;font-weight:normal;color:#ccccdc;-webkit-text-stroke:0.3px currentColor">19</div><div class="t " style="right:917.60px;top:467.92px;font-size:6.7px;line-height:6.7px;font-weight:normal;color:#ccccdc;-webkit-text-stroke:0.3px currentColor">31</div><div class="t " style="right:885.80px;top:467.92px;font-size:6.7px;line-height:6.7px;font-weight:normal;color:#ccccdc;-webkit-text-stroke:0.3px currentColor">19</div><div class="t " style="right:851.00px;top:385.22px;font-size:6.9px;line-height:6.9px;font-weight:normal;color:#c8c8d4;-webkit-text-stroke:0.3px currentColor">20 K</div><div class="t " style="right:851.00px;top:405.12px;font-size:6.9px;line-height:6.9px;font-weight:normal;color:#c8c8d4;-webkit-text-stroke:0.3px currentColor">10 K</div><div class="t " style="right:851.00px;top:424.12px;font-size:6.9px;line-height:6.9px;font-weight:normal;color:#c8c8d4;-webkit-text-stroke:0.3px currentColor">0</div><div class="t " style="left:536.90px;transform:translateX(-50%);top:432.52px;font-size:6.9px;line-height:6.9px;font-weight:normal;color:#c8c8d4;-webkit-text-stroke:0.3px currentColor">07:50</div><div class="t " style="left:670.40px;transform:translateX(-50%);top:432.52px;font-size:6.9px;line-height:6.9px;font-weight:normal;color:#c8c8d4;-webkit-text-stroke:0.3px currentColor">07:55</div><div class="t " style="left:803.90px;transform:translateX(-50%);top:432.52px;font-size:6.9px;line-height:6.9px;font-weight:normal;color:#c8c8d4;-webkit-text-stroke:0.3px currentColor">08:00</div><div class="t " style="left:466.90px;top:442.02px;font-size:6.7px;line-height:6.7px;font-weight:normal;color:#6b9af2;-webkit-text-stroke:0.3px currentColor">Name</div><div class="t " style="right:578.70px;top:442.02px;font-size:6.7px;line-height:6.7px;font-weight:normal;color:#6b9af2;-webkit-text-stroke:0.3px currentColor">Mean</div><div class="t " style="right:537.10px;top:442.02px;font-size:6.7px;line-height:6.7px;font-weight:normal;color:#6b9af2;-webkit-text-stroke:0.3px currentColor">Last *</div><div class="t " style="right:501.00px;top:442.02px;font-size:6.7px;line-height:6.7px;font-weight:normal;color:#6b9af2;-webkit-text-stroke:0.3px currentColor">Max</div><div class="t " style="right:460.70px;top:442.02px;font-size:6.7px;line-height:6.7px;font-weight:normal;color:#6b9af2;-webkit-text-stroke:0.3px currentColor">Min</div><div class="t " style="left:467.00px;top:454.82px;font-size:6.7px;line-height:6.7px;font-weight:normal;color:#ccccdc;-webkit-text-stroke:0.3px currentColor;word-spacing:1px">/ - GET - 200</div><div class="t " style="right:575.30px;top:454.82px;font-size:6.7px;line-height:6.7px;font-weight:normal;color:#ccccdc;-webkit-text-stroke:0.3px currentColor">2.97</div><div class="t " style="right:533.70px;top:454.82px;font-size:6.7px;line-height:6.7px;font-weight:normal;color:#ccccdc;-webkit-text-stroke:0.3px currentColor">5.21</div><div class="t " style="right:492.80px;top:454.82px;font-size:6.7px;line-height:6.7px;font-weight:normal;color:#ccccdc;-webkit-text-stroke:0.3px currentColor">5.21</div><div class="t " style="right:449.80px;top:454.82px;font-size:6.7px;line-height:6.7px;font-weight:normal;color:#ccccdc;-webkit-text-stroke:0.3px currentColor">2.55</div><div class="t " style="left:467.00px;top:468.02px;font-size:6.7px;line-height:6.7px;font-weight:normal;color:#ccccdc;-webkit-text-stroke:0.3px currentColor;word-spacing:1px">/ - GET - 302</div><div class="t " style="right:575.30px;top:468.02px;font-size:6.7px;line-height:6.7px;font-weight:normal;color:#ccccdc;-webkit-text-stroke:0.3px currentColor">34.0</div><div class="t " style="right:533.70px;top:468.02px;font-size:6.7px;line-height:6.7px;font-weight:normal;color:#ccccdc;-webkit-text-stroke:0.3px currentColor">58.5</div><div class="t " style="right:492.80px;top:468.02px;font-size:6.7px;line-height:6.7px;font-weight:normal;color:#ccccdc;-webkit-text-stroke:0.3px currentColor">58.5</div><div class="t " style="right:449.80px;top:468.02px;font-size:6.7px;line-height:6.7px;font-weight:normal;color:#ccccdc;-webkit-text-stroke:0.3px currentColor">29.3</div><div class="t " style="right:421.50px;top:382.12px;font-size:6.9px;line-height:6.9px;font-weight:normal;color:#c8c8d4;-webkit-text-stroke:0.3px currentColor">20</div><div class="t " style="right:421.50px;top:403.62px;font-size:6.9px;line-height:6.9px;font-weight:normal;color:#c8c8d4;-webkit-text-stroke:0.3px currentColor">10</div><div class="t " style="right:421.50px;top:423.92px;font-size:6.9px;line-height:6.9px;font-weight:normal;color:#c8c8d4;-webkit-text-stroke:0.3px currentColor">0</div><div class="t " style="left:968.10px;transform:translateX(-50%);top:432.52px;font-size:6.9px;line-height:6.9px;font-weight:normal;color:#c8c8d4;-webkit-text-stroke:0.3px currentColor">07:50</div><div class="t " style="left:1102.40px;transform:translateX(-50%);top:432.52px;font-size:6.9px;line-height:6.9px;font-weight:normal;color:#c8c8d4;-webkit-text-stroke:0.3px currentColor">07:55</div><div class="t " style="left:1237.10px;transform:translateX(-50%);top:432.52px;font-size:6.9px;line-height:6.9px;font-weight:normal;color:#c8c8d4;-webkit-text-stroke:0.3px currentColor">08:00</div><div class="t " style="left:902.90px;top:442.02px;font-size:6.7px;line-height:6.7px;font-weight:normal;color:#6b9af2;-webkit-text-stroke:0.3px currentColor">Name</div><div class="t " style="right:118.00px;top:442.02px;font-size:6.7px;line-height:6.7px;font-weight:normal;color:#6b9af2;-webkit-text-stroke:0.3px currentColor">Mean</div><div class="t " style="right:79.50px;top:442.02px;font-size:6.7px;line-height:6.7px;font-weight:normal;color:#6b9af2;-webkit-text-stroke:0.3px currentColor">Last *</div><div class="t " style="right:45.70px;top:442.02px;font-size:6.7px;line-height:6.7px;font-weight:normal;color:#6b9af2;-webkit-text-stroke:0.3px currentColor">Max</div><div class="t " style="right:16.80px;top:442.02px;font-size:6.7px;line-height:6.7px;font-weight:normal;color:#6b9af2;-webkit-text-stroke:0.3px currentColor">Min</div><div class="t " style="left:903.00px;top:454.82px;font-size:6.7px;line-height:6.7px;font-weight:normal;color:#ccccdc;-webkit-text-stroke:0.3px currentColor">POST</div><div class="t " style="right:118.00px;top:454.82px;font-size:6.7px;line-height:6.7px;font-weight:normal;color:#ccccdc;-webkit-text-stroke:0.3px currentColor">22.2</div><div class="t " style="right:79.10px;top:454.82px;font-size:6.7px;line-height:6.7px;font-weight:normal;color:#ccccdc;-webkit-text-stroke:0.3px currentColor">23</div><div class="t " style="right:45.70px;top:454.82px;font-size:6.7px;line-height:6.7px;font-weight:normal;color:#ccccdc;-webkit-text-stroke:0.3px currentColor">23</div><div class="t " style="right:14.10px;top:454.82px;font-size:6.7px;line-height:6.7px;font-weight:normal;color:#ccccdc;-webkit-text-stroke:0.3px currentColor">22</div><div class="t " style="left:903.00px;top:468.02px;font-size:6.7px;line-height:6.7px;font-weight:normal;color:#ccccdc;-webkit-text-stroke:0.3px currentColor">OAuth</div><div class="t " style="right:118.00px;top:468.02px;font-size:6.7px;line-height:6.7px;font-weight:normal;color:#ccccdc;-webkit-text-stroke:0.3px currentColor">0</div><div class="t " style="right:79.10px;top:468.02px;font-size:6.7px;line-height:6.7px;font-weight:normal;color:#ccccdc;-webkit-text-stroke:0.3px currentColor">0</div><div class="t " style="right:45.70px;top:468.02px;font-size:6.7px;line-height:6.7px;font-weight:normal;color:#ccccdc;-webkit-text-stroke:0.3px currentColor">0</div><div class="t " style="right:14.10px;top:468.02px;font-size:6.7px;line-height:6.7px;font-weight:normal;color:#ccccdc;-webkit-text-stroke:0.3px currentColor">0</div><svg class="ic" style="left:13px;top:489.5px" width="8" height="8" viewBox="0 0 8 8"><path d="M3.1 2.1 L4.8 4 L3.1 5.9" fill="none" stroke="#ccccdc" stroke-width="0.9"/></svg><div class="t " style="left:21.70px;top:489.34px;font-size:9.1px;line-height:9.1px;font-weight:normal;color:#dcdce6;-webkit-text-stroke:0.5px #dcdce6">Dataproxy Stats</div><div class="t " style="left:96.30px;top:491.02px;font-size:6.9px;line-height:6.9px;font-weight:normal;color:#a0a0aa;font-style:italic;-webkit-text-stroke:0.15px #a0a0aa">(2 panels)</div><svg class="ic" style="left:1306.5px;top:488.5px" width="6" height="10" viewBox="0 0 6 10"><rect x="0.0" y="0.0" width="1.3" height="1.3" fill="#5a5c63"/><rect x="2.6" y="0.0" width="1.3" height="1.3" fill="#5a5c63"/><rect x="0.0" y="2.6" width="1.3" height="1.3" fill="#5a5c63"/><rect x="2.6" y="2.6" width="1.3" height="1.3" fill="#5a5c63"/><rect x="0.0" y="5.2" width="1.3" height="1.3" fill="#5a5c63"/><rect x="2.6" y="5.2" width="1.3" height="1.3" fill="#5a5c63"/><rect x="0.0" y="7.800000000000001" width="1.3" height="1.3" fill="#5a5c63"/><rect x="2.6" y="7.800000000000001" width="1.3" height="1.3" fill="#5a5c63"/></svg><svg class="ic" style="left:13px;top:509.6px" width="8" height="8" viewBox="0 0 8 8"><path d="M3.1 2.1 L4.8 4 L3.1 5.9" fill="none" stroke="#ccccdc" stroke-width="0.9"/></svg><div class="t " style="left:21.70px;top:509.44px;font-size:9.1px;line-height:9.1px;font-weight:normal;color:#dcdce6;-webkit-text-stroke:0.5px #dcdce6">Dashboard Get Stats</div><div class="t " style="left:115.80px;top:511.12px;font-size:6.9px;line-height:6.9px;font-weight:normal;color:#a0a0aa;font-style:italic;-webkit-text-stroke:0.15px #a0a0aa">(2 panels)</div><svg class="ic" style="left:1306.5px;top:508.6px" width="6" height="10" viewBox="0 0 6 10"><rect x="0.0" y="0.0" width="1.3" height="1.3" fill="#5a5c63"/><rect x="2.6" y="0.0" width="1.3" height="1.3" fill="#5a5c63"/><rect x="0.0" y="2.6" width="1.3" height="1.3" fill="#5a5c63"/><rect x="2.6" y="2.6" width="1.3" height="1.3" fill="#5a5c63"/><rect x="0.0" y="5.2" width="1.3" height="1.3" fill="#5a5c63"/><rect x="2.6" y="5.2" width="1.3" height="1.3" fill="#5a5c63"/><rect x="0.0" y="7.800000000000001" width="1.3" height="1.3" fill="#5a5c63"/><rect x="2.6" y="7.800000000000001" width="1.3" height="1.3" fill="#5a5c63"/></svg><svg class="ic" style="left:13px;top:529.6px" width="8" height="8" viewBox="0 0 8 8"><path d="M3.1 2.1 L4.8 4 L3.1 5.9" fill="none" stroke="#ccccdc" stroke-width="0.9"/></svg><div class="t " style="left:21.70px;top:529.44px;font-size:9.1px;line-height:9.1px;font-weight:normal;color:#dcdce6;-webkit-text-stroke:0.5px #dcdce6">Dashboard Save Stats</div><div class="t " style="left:121.50px;top:531.12px;font-size:6.9px;line-height:6.9px;font-weight:normal;color:#a0a0aa;font-style:italic;-webkit-text-stroke:0.15px #a0a0aa">(2 panels)</div><svg class="ic" style="left:1306.5px;top:528.6px" width="6" height="10" viewBox="0 0 6 10"><rect x="0.0" y="0.0" width="1.3" height="1.3" fill="#5a5c63"/><rect x="2.6" y="0.0" width="1.3" height="1.3" fill="#5a5c63"/><rect x="0.0" y="2.6" width="1.3" height="1.3" fill="#5a5c63"/><rect x="2.6" y="2.6" width="1.3" height="1.3" fill="#5a5c63"/><rect x="0.0" y="5.2" width="1.3" height="1.3" fill="#5a5c63"/><rect x="2.6" y="5.2" width="1.3" height="1.3" fill="#5a5c63"/><rect x="0.0" y="7.800000000000001" width="1.3" height="1.3" fill="#5a5c63"/><rect x="2.6" y="7.800000000000001" width="1.3" height="1.3" fill="#5a5c63"/></svg><svg class="ic" style="left:13px;top:549.8px" width="8" height="8" viewBox="0 0 8 8"><path d="M3.1 2.1 L4.8 4 L3.1 5.9" fill="none" stroke="#ccccdc" stroke-width="0.9"/></svg><div class="t " style="left:21.70px;top:549.64px;font-size:9.1px;line-height:9.1px;font-weight:normal;color:#dcdce6;-webkit-text-stroke:0.5px #dcdce6">Dashboard Search Stats</div><div class="t " style="left:130.50px;top:551.32px;font-size:6.9px;line-height:6.9px;font-weight:normal;color:#a0a0aa;font-style:italic;-webkit-text-stroke:0.15px #a0a0aa">(2 panels)</div><svg class="ic" style="left:1306.5px;top:548.8px" width="6" height="10" viewBox="0 0 6 10"><rect x="0.0" y="0.0" width="1.3" height="1.3" fill="#5a5c63"/><rect x="2.6" y="0.0" width="1.3" height="1.3" fill="#5a5c63"/><rect x="0.0" y="2.6" width="1.3" height="1.3" fill="#5a5c63"/><rect x="2.6" y="2.6" width="1.3" height="1.3" fill="#5a5c63"/><rect x="0.0" y="5.2" width="1.3" height="1.3" fill="#5a5c63"/><rect x="2.6" y="5.2" width="1.3" height="1.3" fill="#5a5c63"/><rect x="0.0" y="7.800000000000001" width="1.3" height="1.3" fill="#5a5c63"/><rect x="2.6" y="7.800000000000001" width="1.3" height="1.3" fill="#5a5c63"/></svg><svg class="ic" style="left:170.7px;top:548.5px" width="12" height="12" viewBox="0 0 12 12"><circle cx="6" cy="6" r="3.1" fill="none" stroke="#8e8e96" stroke-width="1.1" stroke-dasharray="1.4 0.6"/><circle cx="6" cy="6" r="1.1" fill="#8e8e96"/></svg><svg class="ic" style="left:190.6px;top:548.8px" width="12" height="12" viewBox="0 0 12 12"><path d="M3.4 3.6 H8.6 M5 3.5 V2.6 H7 V3.5 M3.9 3.8 L4.3 9.6 H7.7 L8.1 3.8" fill="none" stroke="#8e8e96" stroke-width="0.9"/><line x1="6" y1="5" x2="6" y2="8.3" stroke="#8e8e96" stroke-width="0.7"/></svg></body></html>
